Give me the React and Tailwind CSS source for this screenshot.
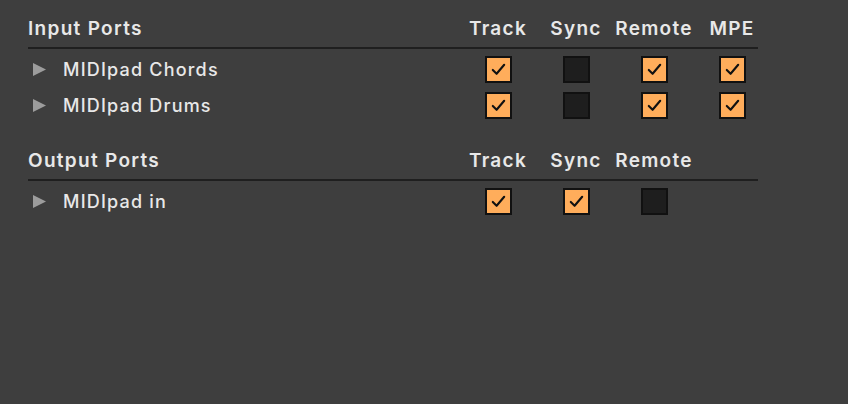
import React from "react";

const Check = ({ on }) => (
  <div className="flex justify-center">
    <div
      className={
        "w-[27px] h-[27px] border-2 border-[#111111] flex items-center justify-center " +
        (on ? "bg-[#ffad5b]" : "bg-[#1e1e1e]")
      }
    >
      {on && (
        <svg width="19" height="19" viewBox="0 0 20 20" fill="none">
          <path d="M4 10.5 L8 14.5 L16 5" stroke="#111" strokeWidth="2.2" strokeLinecap="round" strokeLinejoin="round" />
        </svg>
      )}
    </div>
  </div>
);

const Section = ({ title, cols, rows }) => (
  <div>
    <div className="flex h-[22px] items-center">
      <div className="w-[431px] text-[19px] font-semibold tracking-[1.3px]">{title}</div>
      {cols.map((c) => (
        <div key={c} className="w-[78px] text-center text-[19px] font-semibold tracking-[1.3px]">
          {c}
        </div>
      ))}
    </div>
    <div className="mt-[7px] h-[2px] w-[730px] bg-[#1f1f1f]" />
    <div className="mt-[2px]">
      {rows.map((r) => (
        <div key={r.name} className="flex h-[36px] items-center">
          <div className="w-[431px] flex items-center">
            <svg width="13" height="13" viewBox="0 0 13 13" className="ml-[5px]">
              <polygon points="0,0 13,6.5 0,13" fill="#9c9c9c" />
            </svg>
            <span className="ml-[17px] text-[18px] font-medium tracking-[1.2px]">{r.name}</span>
          </div>
          {r.checks.map((on, i) => (
            <div key={i} className="w-[78px]">
              <Check on={on} />
            </div>
          ))}
        </div>
      ))}
    </div>
  </div>
);

export default function App() {
  return (
    <div
      className="w-[848px] h-[404px] bg-[#3e3e3e] text-[#e8e8e8] pl-[28px] pt-[18px]"
      style={{ fontFamily: "Inter, 'Noto Sans', sans-serif" }}
    >
      <Section
        title="Input Ports"
        cols={["Track", "Sync", "Remote", "MPE"]}
        rows={[
          { name: "MIDIpad Chords", checks: [true, false, true, true] },
          { name: "MIDIpad Drums", checks: [true, false, true, true] },
        ]}
      />
      <div className="h-[27px]" />
      <Section
        title="Output Ports"
        cols={["Track", "Sync", "Remote"]}
        rows={[{ name: "MIDIpad in", checks: [true, true, false] }]}
      />
    </div>
  );
}
